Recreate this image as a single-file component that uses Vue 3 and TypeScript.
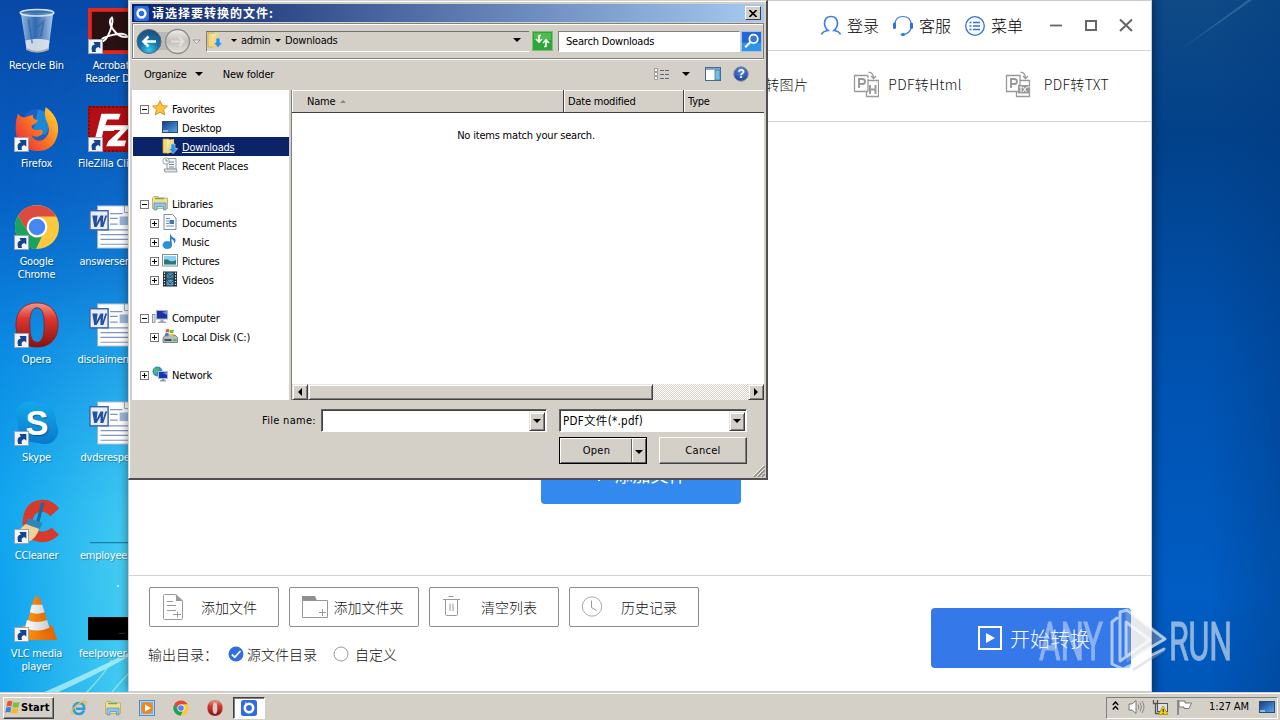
<script setup lang="ts">
interface Shortcut { id: string; icon: string; lines: string[]; link?: boolean }
interface TreeRow { id: string; icon?: string; label?: string; level: number; box?: '+' | '-'; selected?: boolean }

const columnOne: Shortcut[] = [
  { id: 'bin', icon: 'i-bin', lines: ['Recycle Bin'] },
  { id: 'firefox', icon: 'i-firefox', lines: ['Firefox'], link: true },
  { id: 'chrome', icon: 'i-chrome', lines: ['Google', 'Chrome'], link: true },
  { id: 'opera', icon: 'i-opera', lines: ['Opera'], link: true },
  { id: 'skype', icon: 'i-skype', lines: ['Skype'], link: true },
  { id: 'ccleaner', icon: 'i-ccleaner', lines: ['CCleaner'], link: true },
  { id: 'vlc', icon: 'i-vlc', lines: ['VLC media', 'player'], link: true },
]
const columnTwo: Shortcut[] = [
  { id: 'acrobat', icon: 'i-acrobat', lines: ['Acrobat', 'Reader DC'], link: true },
  { id: 'filezilla', icon: 'i-filezilla', lines: ['FileZilla Client'], link: true },
  { id: 'answers', icon: 'i-word', lines: ['answersen....'] },
  { id: 'disclaimer', icon: 'i-word', lines: ['disclaimerm...'] },
  { id: 'dvds', icon: 'i-word', lines: ['dvdsrespe....'] },
  { id: 'employee', icon: 'i-line', lines: ['employeep...'] },
  { id: 'feel', icon: 'i-black', lines: ['feelpower......'] },
]
const tree: TreeRow[] = [
  { id: 'fav', icon: 't-star', label: 'Favorites', level: 0, box: '-' },
  { id: 'desk', icon: 't-desktop', label: 'Desktop', level: 1 },
  { id: 'down', icon: 't-download', label: 'Downloads', level: 1, selected: true },
  { id: 'recent', icon: 't-recent', label: 'Recent Places', level: 1 },
  { id: 'gap1', level: 0 },
  { id: 'lib', icon: 't-library', label: 'Libraries', level: 0, box: '-' },
  { id: 'docs', icon: 't-doc', label: 'Documents', level: 1, box: '+' },
  { id: 'music', icon: 't-music', label: 'Music', level: 1, box: '+' },
  { id: 'pics', icon: 't-picture', label: 'Pictures', level: 1, box: '+' },
  { id: 'vids', icon: 't-video', label: 'Videos', level: 1, box: '+' },
  { id: 'gap2', level: 0 },
  { id: 'comp', icon: 't-computer', label: 'Computer', level: 0, box: '-' },
  { id: 'disk', icon: 't-disk', label: 'Local Disk (C:)', level: 1, box: '+' },
  { id: 'gap3', level: 0 },
  { id: 'net', icon: 't-network', label: 'Network', level: 0, box: '+' },
]
const actions = [
  { icon: 'a-file', label: '添加文件' },
  { icon: 'a-folder', label: '添加文件夹', wide: true },
  { icon: 'a-trash', label: '清空列表' },
  { icon: 'a-clock', label: '历史记录' },
]
const quickLaunch = ['q-ie', 't-library', 'q-player', 'i-chrome', 'i-opera']
</script>

<template>
  <div class="screen">
    <svg class="defs" width="0" height="0">
      <defs>
        <linearGradient id="gBin" x1="0" x2="1" y1="0" y2="0"><stop offset="0" stop-color="#b9d4ee" stop-opacity=".85" /><stop offset=".45" stop-color="#4d7fb8" stop-opacity=".6" /><stop offset="1" stop-color="#c4daee" stop-opacity=".9" /></linearGradient>
        <linearGradient id="gFox" x1="0" x2="1" y1=".8" y2="0"><stop offset="0" stop-color="#e62b3c" /><stop offset=".5" stop-color="#ff7c1f" /><stop offset="1" stop-color="#ffe335" /></linearGradient>
        <linearGradient id="gOpera" x1="0" x2="0" y1="0" y2="1"><stop offset="0" stop-color="#f5988c" /><stop offset=".35" stop-color="#dc3830" /><stop offset="1" stop-color="#8a100e" /></linearGradient>
        <linearGradient id="gSkype" x1="0" x2="0" y1="0" y2="1"><stop offset="0" stop-color="#12a9ec" /><stop offset="1" stop-color="#0a78cc" /></linearGradient>
        <linearGradient id="gCone" x1="0" x2="1" y1="0" y2="0"><stop offset="0" stop-color="#ff9a1c" /><stop offset="1" stop-color="#e06000" /></linearGradient>
        <linearGradient id="gWhite" x1="0" x2="1" y1="0" y2="0"><stop offset="0" stop-color="#fff" /><stop offset="1" stop-color="#c8ccd2" /></linearGradient>
        <linearGradient id="gScreen" x1="0" x2="1" y1="0" y2="1"><stop offset="0" stop-color="#123a86" /><stop offset="1" stop-color="#5aa6ea" /></linearGradient>
        <linearGradient id="gFolder" x1="0" x2="1" y1="0" y2="1"><stop offset="0" stop-color="#fdf3b4" /><stop offset="1" stop-color="#e2b541" /></linearGradient>
        <radialGradient id="gBack" cx=".5" cy=".85" r=".8"><stop offset="0" stop-color="#35c8ee" /><stop offset=".5" stop-color="#1470a8" /><stop offset="1" stop-color="#1d4f80" /></radialGradient>
        <linearGradient id="gFwd" x1="0" x2="0" y1="0" y2="1"><stop offset="0" stop-color="#f0eeea" /><stop offset=".5" stop-color="#c2bfba" /><stop offset="1" stop-color="#e8e6e2" /></linearGradient>
        <radialGradient id="gHelp" cx=".5" cy=".3" r=".8"><stop offset="0" stop-color="#5f8ce4" /><stop offset="1" stop-color="#12358e" /></radialGradient>
      </defs>
      <symbol id="i-bin" viewBox="0 0 48 48">
        <path d="M7 5 L41 5 L36 43 Q24 49 13 43 Z" fill="url(#gBin)" />
        <path d="M12 34 Q24 30 37 34 L36 43 Q24 48 13 43 Z" fill="#e8eaec" opacity=".85" />
        <path d="M15 12 L19 37 M24 20 L31 14 L28 30" stroke="#2a62a4" stroke-width="2" fill="none" opacity=".6" />
        <ellipse cx="24" cy="5" rx="17.5" ry="3.4" fill="#5785b6" fill-opacity=".6" stroke="#d5e2ee" stroke-width="1.6" />
        <path d="M13 43 Q24 48.500 36 43" fill="none" stroke="#aaa" stroke-width="2" />
      </symbol>
      <symbol id="i-firefox" viewBox="0 0 48 48">
        <circle cx="25" cy="21" r="18" fill="#1d5fc4" />
        <path d="M25 4 Q36 5 39 17 L33 30 L20 27 Z" fill="#17a5e6" opacity=".6" />
        <path d="M33 1 Q47 11 46 27 Q43 47 24 47 Q4 46 2 28 Q1 17 4 8 Q8 12 11 12 Q15 10 20 9 Q18 13 25 15 Q23 18 21 19 L18 21 Q20 26 26 25 Q32 24 29 30 Q23 34 18 30 Q22 39 31 35 Q40 28 34 16 Q31 9 33 1Z" fill="url(#gFox)" />
      </symbol>
      <symbol id="i-chrome" viewBox="0 0 48 48">
        <circle cx="24" cy="24" r="23" fill="#fbc93d" />
        <path d="M4.100 12.500 A23 23 0 0 1 44 13 H24 L14.500 29Z" fill="#dc4b3e" />
        <path d="M4.100 12.500 L14.500 29 A11 11 0 0 0 29 34 L23 47 A23 23 0 0 1 4.100 12.500" fill="#1aa260" />
        <circle cx="24" cy="24" r="10.800" fill="#fff" /><circle cx="24" cy="24" r="8.600" fill="#4687f4" />
      </symbol>
      <symbol id="i-opera" viewBox="0 0 48 48">
        <path fill-rule="evenodd" d="M24 1 C38 1 46 10 46 24 S38 47 24 47 S2 38 2 24 S10 1 24 1Z M24 6 C18 6 16.500 14 16.500 24 S18 42 24 42 S31.500 34 31.500 24 S30 6 24 6Z" fill="url(#gOpera)" stroke="#8d1a16" stroke-width=".8" />
      </symbol>
      <symbol id="i-skype" viewBox="0 0 48 48">
        <path d="M14 2 Q20 1 24 3 Q44 3 44 24 Q49 34 42 42 Q36 48 27 45 Q4 45 4 24 Q-1 12 5 6 Q9 2 14 2Z" fill="url(#gSkype)" />
        <text x="24" y="37" text-anchor="middle" font-family="Liberation Sans, sans-serif" font-size="36" font-weight="700" fill="#fff">S</text>
      </symbol>
      <symbol id="i-ccleaner" viewBox="0 0 48 48">
        <path d="M47 11 L38 19 Q30 11 22 17 Q16 26 22 33 Q31 38 39 31 L47 38 Q39 47 27 46 Q8 44 9 24 Q11 3 28 2 Q40 1 47 11Z" fill="#d53a2c" />
        <path d="M30 5 L24 28" stroke="#1a6b9c" stroke-width="3.400" />
        <path d="M15 21 L30 26 L26 33 L12 28Z" fill="#2c86ba" />
        <path d="M12 27 L26 32 Q24 42 14 46 L2 44 Q1 36 12 27Z" fill="#f3d196" />
      </symbol>
      <symbol id="i-vlc" viewBox="0 0 48 48">
        <path d="M9 31 H40 L45 46 H4Z" fill="url(#gCone)" />
        <path d="M21 2 Q24 -1 27 2 L38 37 Q24 44 11 37Z" fill="url(#gCone)" />
        <path d="M18.500 9 H29.500 L32 17 Q24 20 16.500 17Z M13.500 25 Q24 29 34.500 25 L37 33 Q24 39 11.500 33Z" fill="url(#gWhite)" />
      </symbol>
      <symbol id="i-acrobat" viewBox="0 0 48 48">
        <rect width="48" height="48" fill="#e3271c" /><rect x="4" y="4" width="44" height="40" fill="#281013" />
        <path d="M25 10 Q20 14 26 22 Q33 32 41 30 Q39 25 26 28 Q13 31 14 35 Q19 35 23 24 Q27 13 25 10Z" fill="none" stroke="#fff" stroke-width="2" />
      </symbol>
      <symbol id="i-filezilla" viewBox="0 0 48 48">
        <rect width="48" height="48" fill="#b10f14" /><rect x="1" y="1" width="46" height="46" fill="none" stroke="#7e0808" stroke-width="2" stroke-dasharray="2 2" />
        <path d="M14 8 H34 L32 14 H20 L18 20 H29 L27 26 H16 L13 39 H6Z M28 20 H45 L30 36 H40 L38 42 H19 L21 37 L34 25 H26Z" fill="#fff" />
      </symbol>
      <symbol id="i-word" viewBox="0 0 48 48">
        <rect x="10" y="2" width="38" height="44" fill="#fff" stroke="#9fb3cc" /><path d="M38 2 V9 H48" fill="none" stroke="#8ba2c0" />
        <path d="M23 10 H36 M23 15 H31 M23 21 H31 M13 27 H46 M13 32 H46 M13 37 H46 M13 42 H46" stroke="#7f97c0" stroke-width="1.300" /><rect x="33" y="13" width="12" height="9" fill="#9bb6da" />
        <rect x="2" y="7" width="19" height="20" fill="#e6eefb" stroke="#3b62ab" stroke-width="1.500" />
        <path d="M4.500 12 H10 L9 20 L13 12 H16 L15.500 20 L18 12 H20 L16 24 H13 L13 17 L9 24 H6.500Z" fill="#274fa0" />
      </symbol>
      <symbol id="i-line" viewBox="0 0 48 48"><path d="M2 46.500 H48" stroke="#1b7fa8" stroke-width="1.400" /></symbol>
      <symbol id="i-black" viewBox="0 0 48 48"><rect y="22" width="48" height="24" fill="#000" /><path d="M32 39 h7" stroke="#333" /></symbol>
      <symbol id="i-arrow" viewBox="0 0 15 15">
        <rect x=".5" y=".5" width="14" height="14" fill="#f1f4f8" stroke="#9aa4b0" />
        <path d="M4.200 13 Q2 6.500 6.800 5.600 L5.500 3 H12.300 V9.500 L10.200 8 Q6.500 9 8 13Z" fill="#14458c" />
      </symbol>

      <symbol id="t-star" viewBox="0 0 16 16"><path d="M8 .7 L10.200 5.600 L15.500 6.100 L11.500 9.700 L12.800 15 L8 12.200 L3.200 15 L4.500 9.700 L.5 6.100 L5.800 5.600Z" fill="#fcc53c" stroke="#d98a1a" stroke-width=".9" /></symbol>
      <symbol id="t-desktop" viewBox="0 0 16 16"><rect x=".5" y="2.500" width="15" height="11" fill="url(#gScreen)" stroke="#274b7c" /><path d="M1 12 h5" stroke="#b8d4ee" stroke-width="1.400" /></symbol>
      <symbol id="t-download" viewBox="0 0 16 16"><path d="M1 1 H7 V15 H1Z" fill="#f3d878" stroke="#c9a13a" stroke-width=".7" /><path d="M5 2 L12 1 V14 L5 15.500Z" fill="url(#gFolder)" /><path d="M9 6 H13 V10.500 H15.800 L11 15.700 L6.500 10.500 H9Z" fill="#2f8fdc" stroke="#d0eafc" stroke-width=".6" /></symbol>
      <symbol id="t-recent" viewBox="0 0 16 16"><path d="M5 1.500 H14 V12 H5Z" fill="#f4f5f6" stroke="#8b939c" stroke-width=".9" /><path d="M7 5 h5 M7 7.500 h5 M7 10 h5" stroke="#7b8794" /><path d="M2 12 H14.500 L15 15 H3Z" fill="#dfe2e6" stroke="#858d96" stroke-width=".8" /><circle cx="4" cy="4" r="3.200" fill="#fff" stroke="#7f8d9c" stroke-width=".8" /><path d="M4 2 V4 H5.800" fill="none" stroke="#44566a" stroke-width=".8" /></symbol>
      <symbol id="t-library" viewBox="0 0 16 16"><path d="M.5 3 L2 1.500 H6 L7 3 H15.500 V13.500 H.5Z" fill="#f3df92" stroke="#c5a448" stroke-width=".8" /><path d="M3 3.500 h9" stroke="#65b05c" stroke-width="1.500" /><path d="M2 8 H14 V15 H11.500 V11.500 H5 V15 H2Z" fill="#8cc6ea" stroke="#4f93c2" stroke-width=".7" /></symbol>
      <symbol id="t-doc" viewBox="0 0 16 16"><path d="M2 .5 H10.500 L14 4 V15.500 H2Z" fill="#fafcfe" stroke="#7c8ea4" /><path d="M4 4.500 h4 M4 7 h3 M4 9.500 h3 M4 12 h8" stroke="#6f94c4" /><rect x="7.500" y="6" width="4.500" height="4" fill="#3978b4" /></symbol>
      <symbol id="t-music" viewBox="0 0 16 16"><ellipse cx="5.300" cy="12" rx="4.300" ry="3.500" fill="#2794e0" stroke="#1768b4" stroke-width=".6" /><path d="M8 12 V.7 Q9.500 4 13 5.500 Q14.500 8 12 10.500 Q12.500 7 9.600 6 V12Z" fill="#2a7fce" /></symbol>
      <symbol id="t-picture" viewBox="0 0 16 16"><rect x=".5" y="2.500" width="15" height="11.500" fill="#fff" stroke="#7f8c98" /><rect x="2" y="4" width="12" height="8.500" fill="#8fd0f0" /><path d="M2 8 Q5 6 8 9 Q11 10 14 8 V12.500 H2Z" fill="#287a78" /></symbol>
      <symbol id="t-video" viewBox="0 0 16 16"><rect x="1" y=".5" width="14" height="15" fill="#1d2530" /><path d="M2.500 1.500 V15 M13.500 1.500 V15" stroke="#dfe8f0" stroke-width="1.300" stroke-dasharray="1.400 1.400" /><rect x="4.500" y="1.500" width="7" height="6" fill="#2f8fb4" /><rect x="4.500" y="8.500" width="7" height="6" fill="#3ea4cc" /><path d="M5 2 l3 4 l3 -3 M5 9 l3 4 l3-3" stroke="#8e2830" fill="none" /></symbol>
      <symbol id="t-computer" viewBox="0 0 16 16"><rect x="4.500" y="1.500" width="11" height="8.500" fill="#1b32a8" stroke="#a9b4c6" /><path d="M10 3 L15 2 V6Z" fill="#6c8ae8" /><path d="M8.500 10.500 h3 v2 h2.500 v1.500 h-8 v-1.500 h2.500Z" fill="#9ba5b6" /><rect x=".5" y="5.500" width="2.500" height="8" fill="#dfe4ea" stroke="#7d8896" stroke-width=".8" /></symbol>
      <symbol id="t-disk" viewBox="0 0 16 16"><path d="M1 9.500 L4 7 H13 L15.500 9.500 V14.500 H1Z" fill="#b5bac2" stroke="#687078" stroke-width=".8" /><path d="M2.500 11 h7 v2 h-7Z" fill="#45505c" /><path d="M11 11 h3.500 v2 h-3.500Z" fill="#58c248" /><path d="M4 1.500 Q6 .5 7.500 1.500 L7 4.500 Q5.500 3.700 3.500 4.500Z" fill="#e4572e" /><path d="M8.200 1.800 Q10 2.700 12 1.800 L11.300 4.800 Q9.500 5.500 7.700 4.700Z" fill="#67b83c" /><path d="M3.300 5.200 Q5 4.500 6.800 5.300 L6.200 8.300 H2.500Z" fill="#3a86d4" /><path d="M7.500 5.500 Q9.300 6.300 11.200 5.500 L10.500 8.600 H6.800Z" fill="#f4c22f" /></symbol>
      <symbol id="t-network" viewBox="0 0 16 16"><circle cx="5.500" cy="5.500" r="5" fill="#2f93cf" /><path d="M2 3 Q5 1 7 3 L5 7 L2 8Z" fill="#56b868" /><rect x="6.500" y="5.500" width="9" height="7" fill="#1834b0" stroke="#b1bccb" /><path d="M11 7 L15 6 V9Z" fill="#6c8ae8" /><path d="M9.500 13 h3 v1.200 h1.500 v1.300 h-6 v-1.300 h1.500Z" fill="#8b97aa" /></symbol>

      <symbol id="a-file" viewBox="0 0 28 28"><path d="M16 1.500 H5.500 Q4.500 1.500 4.500 2.500 V25.500 Q4.500 26.500 5.500 26.500 H22.500 Q23.500 26.500 23.500 25.500 V8Z" fill="none" stroke="#999" /><path d="M17 1 L24 8 H17Z" fill="#999" /><path d="M8 8.500 h6 M8 12.500 h9 M8 17.500 h9 M14 21.500 h8 M18.500 18.500 v6" stroke="#999" /></symbol>
      <symbol id="a-folder" viewBox="0 0 28 28"><path d="M1.500 7.500 H26.500 V24.500 H1.500Z" fill="none" stroke="#999" /><path d="M1 3 H14 L16 7.500 H1Z" fill="#8f8f8f" /><path d="M18 19.500 h7 M21.500 16 v7" stroke="#999" /></symbol>
      <symbol id="a-trash" viewBox="0 0 28 28"><path d="M4 6.500 H21 M9.500 3.500 H14.500 M6.500 7 V21.500 Q6.500 22.500 7.500 22.500 H17.500 Q18.500 22.500 18.500 21.500 V7 M11 10.500 V18 M14 10.500 V18" fill="none" stroke="#999" /></symbol>
      <symbol id="a-clock" viewBox="0 0 28 28"><circle cx="13" cy="13.500" r="9.700" fill="none" stroke="#aaa" /><path d="M12.500 7.500 V14.500 L17.500 17.500" fill="none" stroke="#999" /></symbol>
      <symbol id="a-logo" viewBox="0 0 16 16"><rect width="16" height="16" rx="2.500" fill="#2c6be4" /><circle cx="8" cy="8" r="4.200" fill="none" stroke="#fff" stroke-width="2.600" /><path d="M4 1.500 L8 4.500 L4 7Z" fill="#fff" opacity=".5" /></symbol>
      <symbol id="q-ie" viewBox="0 0 16 16"><path d="M13 10.500 Q11.500 14 8 14 Q3 14 2.700 8.500 Q3 3 8 3 Q13.500 3.200 13.200 8.800 H5" fill="none" stroke="#2d9bdc" stroke-width="2.600" /><path d="M1.500 14.500 Q-1 11 6 5 Q12 .5 15 1.800 Q16 3 14 6" fill="none" stroke="#e9bc3c" stroke-width="1.300" /></symbol>
      <symbol id="q-player" viewBox="0 0 16 16"><rect x=".5" y=".5" width="15" height="15" fill="#b7d5ef" stroke="#4f8fc4" /><rect x="2" y="2" width="12" height="12" fill="#7fb2de" /><circle cx="8" cy="8" r="6" fill="#f0871c" /><path d="M6 4.500 L12 8 L6 11.500Z" fill="#fff" /></symbol>
    </svg>

    <svg class="wallpaper" width="1280" height="720" viewBox="0 0 1280 720">
      <defs>
        <linearGradient id="wl" x1="0" x2="0" y1="0" y2="1"><stop offset="0" stop-color="#0848a6" /><stop offset=".28" stop-color="#0761c6" /><stop offset=".5" stop-color="#0b8be4" /><stop offset=".72" stop-color="#12a6f0" /><stop offset="1" stop-color="#0ca0ec" /></linearGradient>
        <linearGradient id="wlx" x1="0" x2="1" y1="0" y2="0"><stop offset="0" stop-color="#5fe0f4" stop-opacity="0" /><stop offset="1" stop-color="#5fe0f4" stop-opacity=".75" /></linearGradient>
        <linearGradient id="wm" x1="0" x2="0" y1="0" y2="1"><stop offset="0" stop-color="#000" /><stop offset=".4" stop-color="#222" /><stop offset=".8" stop-color="#fff" /></linearGradient>
        <mask id="mk"><rect width="140" height="700" fill="url(#wm)" /></mask>
        <linearGradient id="wr" x1="0" x2="0" y1="0" y2="1"><stop offset="0" stop-color="#0f4a86" /><stop offset=".19" stop-color="#02418a" /><stop offset=".5" stop-color="#0051ae" /><stop offset=".85" stop-color="#005dc3" /><stop offset="1" stop-color="#0056b8" /></linearGradient>
        <linearGradient id="wrx" x1="0" x2="1" y1="0" y2="0"><stop offset="0" stop-color="#003070" stop-opacity=".3" /><stop offset=".12" stop-color="#003a80" stop-opacity="0" /><stop offset=".45" stop-color="#003a80" stop-opacity="0" /><stop offset="1" stop-color="#003a80" stop-opacity=".4" /></linearGradient>
      </defs>
      <rect width="140" height="700" fill="url(#wl)" />
      <rect width="140" height="700" fill="url(#wlx)" mask="url(#mk)" />
      <path d="M40 694 Q90 672 130 652 L130 656 Q90 678 54 694Z" fill="#b9f3f8" opacity=".75" />
      <path d="M86 693 Q104 675 112 660 M112 692 Q122 680 130 672" stroke="#a7f0d8" stroke-width="1.500" fill="none" opacity=".7" />
      <circle cx="118" cy="586" r="1" fill="#d8fbff" />
      <rect x="1150" width="130" height="700" fill="url(#wr)" />
      <rect x="1150" width="130" height="700" fill="url(#wrx)" />
      <path d="M1180 50 L1248 0 H1252Z" fill="#5e93bd" opacity=".4" />
    </svg>

    <div class="desk col1">
      <div v-for="s in columnOne" :key="s.id" class="shortcut">
        <div class="pic"><svg width="46" height="46"><use :href="'#' + s.icon" /></svg><svg v-if="s.link" class="lnk" width="15" height="15"><use href="#i-arrow" /></svg></div>
        <span v-for="l in s.lines" :key="l">{{ l }}</span>
      </div>
    </div>
    <div class="desk col2">
      <div v-for="s in columnTwo" :key="s.id" class="shortcut">
        <div class="pic"><svg width="46" height="46"><use :href="'#' + s.icon" /></svg><svg v-if="s.link" class="lnk" width="15" height="15"><use href="#i-arrow" /></svg></div>
        <span v-for="l in s.lines" :key="l">{{ l }}</span>
      </div>
    </div>

    <main class="app">
      <header class="app-top">
        <span class="tool"><svg width="22" height="22" viewBox="0 0 22 22"><path d="M1.500 19.500 Q3 16 8 15.500 Q4.500 12.500 4.500 8 Q5 1.500 11 1.500 Q17 1.500 17.500 8 Q17.500 12.500 14 15.500 Q19 16 20.500 19.500" fill="none" stroke="#3f7de6" stroke-width="1.700" /></svg>登录</span>
        <span class="tool"><svg width="22" height="22" viewBox="0 0 22 22"><path d="M3 9 Q3.500 1.500 11 1.500 Q18.500 1.500 19 9 M19 13 Q17.500 18.500 12 19.500" fill="none" stroke="#3f7de6" stroke-width="1.200" /><rect x="1" y="7.500" width="3" height="6.500" rx="1.500" fill="#2f6fe0" /><rect x="18" y="7.500" width="3" height="6.500" rx="1.500" fill="#2f6fe0" /><ellipse cx="11" cy="19.500" rx="2.200" ry="1.500" fill="#2f6fe0" /></svg>客服</span>
        <span class="tool"><svg width="22" height="22" viewBox="0 0 22 22"><circle cx="11" cy="11" r="9.300" fill="none" stroke="#2f6fe0" stroke-width="1.300" /><path d="M5.500 7.500 h2 M9 7.500 h7 M5.500 11 h2 M9 11 h7 M5.500 14.500 h2 M9 14.500 h7" stroke="#2f6fe0" stroke-width="1.500" /></svg>菜单</span>
        <svg class="winctl" width="90" height="16" viewBox="0 0 90 16"><path d="M1 7.500 H13" stroke="#666" stroke-width="1.800" /><rect x="37" y="3" width="10" height="9" fill="none" stroke="#666" stroke-width="2" /><path d="M71 1.500 L83 13 M83 1.500 L71 13" stroke="#666" stroke-width="2" /></svg>
      </header>
      <nav class="tabs">
        <span class="tab t1">PDF转图片</span>
        <span class="tab t2"><svg width="26" height="28" viewBox="0 0 26 28"><path d="M15 7 V5 Q15 4.500 14.500 4.500 H2 Q1.500 4.500 1.500 5 V20 Q1.500 20.500 2 20.500 H14.500 Q15 20.500 15 20 V8 M15.500 9.500 H25.500 V25.500 H13.500 V21 M15.500 1.500 Q20 1 20.500 7 M18 5 L20.500 7.500 L23 5" fill="none" stroke="#999" stroke-width="1.300" /><path d="M6 17 V8 H9.500 Q12 8.200 12 10.500 T9.500 13 H6 M17 14 V23 M22.500 14 V23 M17 18.500 H22.500" fill="none" stroke="#999" stroke-width="1.900" /></svg>PDF转Html</span>
        <span class="tab t3"><svg width="26" height="28" viewBox="0 0 26 28"><path d="M1.500 4.500 H15 V20.500 H1.500Z M15.500 9.500 H24.500 V25.500 H11.500 V21 M15.500 1.500 Q20 1 20.500 7 M18 5 L20.500 7.500 L23 5" fill="none" stroke="#999" stroke-width="1.300" /><path d="M6 17 V8 H9.500 Q12 8.200 12 10.500 T9.500 13 H6" fill="none" stroke="#999" stroke-width="1.900" /><rect x="13" y="14" width="12" height="8.500" fill="#999" /><path d="M14.500 16 h3 M16 16 v5 M18 16 l3.500 5 M21.500 16 l-3.500 5 M22 16 h2.500" stroke="#fff" /></svg>PDF转TXT</span>
      </nav>
      <section class="canvas"><button class="add"><svg width="14" height="18" viewBox="0 0 14 18"><path d="M7 2 V16 M0 9 H14" stroke="#fff" stroke-width="2" /></svg>添加文件</button></section>
      <footer class="app-bottom">
        <div class="left">
          <div class="actions">
            <button v-for="a in actions" :key="a.icon" class="act" :class="{ wide: a.wide }"><svg width="28" height="28"><use :href="'#' + a.icon" /></svg><span>{{ a.label }}</span></button>
          </div>
          <div class="output"><span>输出目录：</span><svg width="16" height="16" viewBox="0 0 16 16"><circle cx="8" cy="8" r="7.500" fill="#2f6fdf" /><path d="M3.800 8.500 L6.800 11.200 L12.500 5" fill="none" stroke="#fff" stroke-width="1.700" /></svg><span class="first">源文件目录</span><svg width="16" height="16" viewBox="0 0 16 16"><circle cx="8" cy="8" r="7" fill="#fff" stroke="#999" /></svg><span class="second">自定义</span></div>
        </div>
        <button class="start-convert"><svg width="24" height="24" viewBox="0 0 24 24"><rect x="1" y="1" width="22" height="22" fill="none" stroke="#fff" stroke-width="2" /><path d="M8 7 L17 12 L8 17Z" fill="#fff" /></svg>开始转换</button>
      </footer>
    </main>

    <div class="dialog">
      <div class="title"><svg width="15" height="15"><use href="#a-logo" /></svg><b>请选择要转换的文件:</b><span class="close"><svg width="8" height="7" viewBox="0 0 8 7"><path d="M.5 0 L7.500 7 M7.500 0 L.5 7" stroke="#000" stroke-width="1.600" /></svg></span></div>
      <div class="address">
        <svg class="nav" width="70" height="30" viewBox="0 0 70 30"><rect x="14" y="5" width="28" height="18" fill="#bcb9b4" /><circle cx="14" cy="14.500" r="12" fill="url(#gBack)" stroke="#5a6670" /><path d="M21 14.500 H9 M13.500 9.500 L8.500 14.500 L13.500 19.500" fill="none" stroke="#fff" stroke-width="2.600" /><circle cx="42.500" cy="14.500" r="12" fill="url(#gFwd)" stroke="#8f8d89" stroke-width="1.300" /><path d="M36 14.500 H48 M44 10 L48.500 14.500 L44 19" fill="none" stroke="#e2e0dc" stroke-width="2.200" /><path d="M58 13 H65 L61.500 16.500Z" fill="#eee" stroke="#8e8b86" stroke-width=".8" /></svg>
        <div class="crumbs"><svg width="16" height="16"><use href="#t-download" /></svg><i class="tri c1"></i><span class="adm">admin</span><i class="tri c2"></i><span>Downloads</span><i class="tri big c3"></i></div>
        <svg class="refresh" width="21" height="20" viewBox="0 0 21 20"><rect x=".5" y=".5" width="20" height="19" fill="#2fa63a" stroke="#7dbb7f" /><rect x="2" y="2" width="17" height="7" fill="#64c95f" opacity=".6" /><path d="M7 4 V10 M4 8 L7 11 L10 8 M14 16 V10 M11 12 L14 9 L17 12 M7 4.500 H9 M12 15.500 H14" fill="none" stroke="#fff" stroke-width="1.600" /></svg>
        <div class="search">Search Downloads</div>
        <svg class="go" width="21" height="21" viewBox="0 0 20 20"><rect x=".5" y=".5" width="19" height="19" fill="#2166d6" stroke="#9bc4ee" /><rect x="1" y="11" width="18" height="8" fill="#38a6ee" opacity=".7" /><circle cx="12" cy="7.500" r="4" fill="#3c76d8" stroke="#fff" stroke-width="1.700" /><path d="M9 10.500 L4 15.500" stroke="#fff" stroke-width="2.200" /></svg>
      </div>
      <div class="commands"><span>Organize</span><i class="tri big"></i><span class="newf">New folder</span>
        <svg class="view" width="16" height="13" viewBox="0 0 16 13"><path d="M.5 .5 h3 v3 h-3Z M.5 4.500 h3 v3 h-3Z M.5 8.500 h3 v3 h-3Z" fill="#fff" stroke="#8a8a8a" stroke-width=".8" /><path d="M6 2.500 h4 M11 2.500 h4 M6 6.500 h4 M11 6.500 h4 M6 10.500 h4 M11 10.500 h4" stroke="#5c6878" /></svg>
        <i class="tri big v"></i>
        <svg class="pane" width="16" height="14" viewBox="0 0 16 14"><rect x=".5" y=".5" width="15" height="13" fill="#fff" stroke="#46688f" /><path d="M1 2 H15" stroke="#86a7cc" stroke-width="2" /><rect x="10" y="3" width="5" height="10" fill="#72bfe8" stroke="#46789f" stroke-width=".8" /></svg>
        <svg class="help" width="16" height="16" viewBox="0 0 16 16"><circle cx="8" cy="8" r="7.200" fill="url(#gHelp)" stroke="#7f8a9c" /><text x="8" y="12.200" text-anchor="middle" font-family="Liberation Sans, sans-serif" font-weight="700" font-size="12" fill="#fff">?</text></svg>
      </div>
      <div class="body">
        <div class="tree">
          <div v-for="r in tree" :key="r.id" class="row" :class="['l' + r.level, { selected: r.selected }]">
            <svg v-if="r.label" class="box" width="9" height="9" viewBox="0 0 9 9"><g v-if="r.box"><rect x=".5" y=".5" width="8" height="8" fill="#fff" stroke="#777" /><path d="M2 4.500 H7" stroke="#000" /><path v-if="r.box === '+'" d="M4.500 2 V7" stroke="#000" /></g></svg>
            <svg v-if="r.icon" class="ti" width="16" height="16"><use :href="'#' + r.icon" /></svg><span v-if="r.label">{{ r.label }}</span>
          </div>
        </div>
        <div class="files">
          <div class="heads"><span class="h n">Name<i class="up"></i></span><span class="h d">Date modified</span><span class="h t">Type</span></div>
          <div class="empty">No items match your search.</div>
          <div class="hscroll"><span class="sb"><i class="lt"></i></span><span class="thumb"></span><span class="track"></span><span class="sb"><i class="rt"></i></span></div>
        </div>
      </div>
      <div class="bottom">
        <div class="line"><span class="fn">File name:</span><div class="combo name"><span class="dd"><i class="tri big"></i></span></div><div class="combo filter"><span class="val">PDF文件(*.pdf)</span><span class="dd"><i class="tri big"></i></span></div></div>
        <div class="line two"><div class="btn open"><span>Open</span><em><i class="tri big"></i></em></div><div class="btn cancel">Cancel</div></div>
      </div>
      <svg class="grip" width="12" height="12" viewBox="0 0 12 12"><path d="M1 12 L12 1 M5 12 L12 5 M9 12 L12 9" stroke="#8a867e" stroke-width="1.500" /><path d="M0 11 L11 0 M4 11 L11 4" stroke="#fff" stroke-width=".8" /></svg>
    </div>

    <div class="taskbar">
      <div class="start"><svg width="17" height="17" viewBox="0 0 17 17"><path d="M3.500 2.500 Q6 1 8.300 2.500 L7.400 7.500 Q5 6.300 2.500 7.500Z" fill="#e9542c" /><path d="M9.300 3 Q12 4.500 15.500 3 L14.500 8 Q11.500 9.300 8.400 8Z" fill="#7bbf3f" /><path d="M2.300 8.600 Q4.800 7.300 7.200 8.600 L6.300 13.600 Q3.800 12.300 1.300 13.600Z" fill="#3b80d6" /><path d="M8.200 9 Q11.200 10.400 14.300 9.100 L13.300 14.100 Q10.200 15.500 7.300 14Z" fill="#f5b926" /></svg><span>Start</span></div>
      <div class="quick"><svg v-for="q in quickLaunch" :key="q" width="16" height="16"><use :href="'#' + q" /></svg></div>
      <div class="active"><svg width="16" height="16"><use href="#a-logo" /></svg></div>
      <div class="tray">
        <svg class="chev" width="7" height="11" viewBox="0 0 7 11"><path d="M.8 4 L3.500 1 L6.200 4 M.8 8.500 L3.500 5.500 L6.200 8.500" fill="none" stroke="#000" stroke-width="1.400" /></svg>
        <svg width="17" height="16" viewBox="0 0 17 16"><path d="M1 5 H4 L8 1.500 V14.500 L4 11 H1Z" fill="#fff" stroke="#777" /><path d="M10 5.500 Q12 8 10 10.500 M12 3.500 Q15 8 12 12.500 M14 2 Q18 8 14 14" fill="none" stroke="#888" /></svg>
        <svg width="17" height="16" viewBox="0 0 17 16"><rect x="5.500" y="4.500" width="10" height="8" fill="#dde0e4" stroke="#555" /><path d="M1.500 1 V4.500 H5.500 V1 M3.500 5 V14.500 H8" fill="none" stroke="#555" stroke-width="1.300" /><path d="M11 7 L16 15.500 H6.500Z" fill="#f8d414" stroke="#a08000" stroke-width=".7" /><path d="M11.200 10 V13 M11.200 13.800 V14.800" stroke="#000" /></svg>
        <svg width="17" height="16" viewBox="0 0 17 16"><path d="M2 1 V16" stroke="#777" stroke-width="1.500" /><path d="M3 2 H9 V4 H15.500 L13 9.500 H8 V8 H3Z" fill="#fff" stroke="#777" /></svg>
        <span class="clock">1:27 AM</span>
        <svg class="sd" width="16" height="16"><use href="#t-desktop" /></svg>
      </div>
    </div>

    <svg class="mark" width="200" height="74" viewBox="0 0 200 74">
      <g fill="#e4eaf2" stroke="#e4eaf2" stroke-width=".9" font-family="Roboto, sans-serif" font-size="53"><text x="3" y="56" textLength="64" lengthAdjust="spacingAndGlyphs" opacity=".5">ANY</text><text x="133" y="56" textLength="63" lengthAdjust="spacingAndGlyphs" opacity=".62">RUN</text></g>
      <path d="M91 8 L128 35 L92 56 L91 8Z M97 66 L128 46" fill="#b9c0c8" stroke="#b9c0c8" stroke-width="3" opacity=".35" />
      <path d="M81 14 L76 18 V60 L87 65 L128 45 M84 56 V8 L91 6 L129 35 L100 52 M90 52 V18 L114 36 L84 57" fill="none" stroke="#fff" stroke-width="3" stroke-linejoin="round" stroke-linecap="round" opacity=".6" />
    </svg>
  </div>
</template>

<style>
body { margin: 0; overflow: hidden; }
</style>
<style scoped>
* { box-sizing: border-box; }
.screen { position: relative; width: 1280px; height: 720px; overflow: hidden; background: #0b62c4; font: 11px/13px "DejaVu Sans Condensed", "Noto Sans CJK SC", sans-serif; color: #000; white-space: nowrap; letter-spacing: -.2px; }
svg { display: block; flex: none; }
button { font: inherit; border: 0; padding: 0; letter-spacing: inherit; }
.defs, .wallpaper { position: absolute; left: 0; top: 0; }
.desk { position: absolute; top: 8px; width: 76px; }
.col1 { left: -1px; }
.col2 { left: 66px; width: 90px; }
.shortcut { height: 98px; display: flex; flex-direction: column; align-items: center; color: #fff; text-shadow: 1px 1px 1px #0005; }
.col1 .shortcut { padding-right: 1px; }
.pic { position: relative; width: 46px; height: 46px; margin-bottom: 5px; }
.lnk { position: absolute; left: 0; bottom: 0; }

.app { position: absolute; left: 128px; top: 0; width: 1024px; height: 692px; background: #fff; border: 1px solid #c9ccd0; display: flex; flex-direction: column; box-shadow: 0 0 9px #0007; font-family: "Noto Sans CJK SC", sans-serif; font-weight: 300; color: #111; letter-spacing: 0; }
.app-top { height: 50px; border-bottom: 1px solid #d2d2d2; display: flex; align-items: center; justify-content: flex-end; font-size: 16px; color: #000; padding-right: 12px; }
.tool { display: flex; align-items: center; gap: 5px; margin-right: 13px; }
.tool:nth-child(3) { margin-right: 26px; }
.tabs { height: 71px; border-bottom: 1px solid #d2d2d2; display: flex; align-items: center; justify-content: flex-end; font-size: 14px; letter-spacing: .35px; padding: 0 42px 3px 0; }
.tab { display: flex; align-items: center; gap: 9px; }
.t1 { margin-right: 45px; }
.t2 { margin-right: 43px; }
.t3 { gap: 13px; }
.canvas { height: 454px; border-bottom: 1px solid #d2d2d2; display: flex; justify-content: center; align-items: flex-end; padding: 0 0 71px 2px; }
.add { width: 200px; height: 60px; border-radius: 4px; background: #3389ee; color: #fff; font-size: 18px; font-weight: 400; display: flex; align-items: center; justify-content: center; gap: 9px; padding-right: 4px; }
.app-bottom { flex: 1; display: flex; justify-content: space-between; padding: 11px 20px 0; }
.actions { display: flex; gap: 10px; }
.act { width: 130px; height: 40px; border: 1px solid #8c8c8c; border-radius: 2px; background: #fff; display: flex; align-items: center; font-size: 14px; color: #111; padding-left: 9px; font-weight: 300; }
.act span { flex: 1; text-align: center; padding-right: 7px; }
.act.wide span { padding-right: 10px; }
.act.wide { padding-left: 11px; }
.output { display: flex; align-items: center; height: 20px; margin-top: 17px; font-size: 14px; }
.output > span:first-child { width: 79px; margin-left: -1px; margin-right: 1px; }
.output .first { margin: 0 16px 0 3px; }
.second { margin-left: 6px; }
.start-convert { width: 200px; height: 60px; margin-top: 21px; border-radius: 4px; background: #3478ea; color: #fff; font-size: 20px; font-weight: 300; display: flex; align-items: center; gap: 8px; padding-left: 47px; }

.dialog { position: absolute; left: 128px; top: 0; width: 640px; height: 480px; background: #d4d0c8; border: 1px solid #d4d0c8; border-right: 2px solid #505050; border-bottom: 2px solid #505050; box-shadow: inset 1px 1px #fff; padding: 3px 2px 0 3px; }
.title { height: 18px; display: flex; align-items: center; background: linear-gradient(90deg, #0a246a, #a6caf0); color: #fff; padding: 0 3px 0 2px; }
.title b { font: 700 12px/16px "Noto Sans CJK SC", sans-serif; margin: -1px 0 0 3px; letter-spacing: 1px; }
.close { margin-left: auto; width: 16px; height: 14px; background: #d4d0c8; border: 1px solid; border-color: #fff #404040 #404040 #fff; display: flex; align-items: center; justify-content: center; }
.address { height: 36px; margin-top: 1px; border: 1px solid #808080; box-shadow: inset 1px 1px #fff, 0 1px #fff; display: flex; align-items: center; padding-left: 2px; }
.nav { margin-top: 1px; }
.crumbs { width: 323px; height: 21px; border-top: 1px solid #707070; border-left: 1px solid #808080; border-bottom: 1px solid #fff; display: flex; align-items: center; margin-left: 1px; padding-bottom: 2px; }
.tri { border: 3px solid transparent; border-top-color: #000; border-bottom: 0; width: 0; height: 0; }
.big { border-width: 4px 4px 0; }
.adm { letter-spacing: -.4px; }
.c1 { margin: 0 4px 0 8px; } .c2 { margin: 0 4px 0 5px; } .c3 { margin: 0 8px 0 auto; }
.refresh { margin-left: 3px; }
.search { width: 182px; height: 21px; margin: 0 1px 0 5px; background: #fff; border: 1px solid #808080; border-right-color: #fff; border-bottom-color: #fff; padding: 3px 0 0 7px; }
.commands { height: 31px; display: flex; align-items: center; padding: 0 15px 1px 12px; }
.commands > .tri { margin-left: 8px; }
.newf { margin-left: 20px; }
.view { margin-left: auto; } .commands > .v { margin: 0 15px 0 12px; } .pane { margin-right: 12px; }
.body { height: 310px; display: flex; }
.tree { width: 157px; background: #fff; padding: 9px 0 0 1px; }
.row { height: 19px; display: flex; align-items: center; padding-left: 7px; }
.row.l1 { padding-left: 17px; }
.box { margin-right: 3px; position: relative; top: 1px; }
.ti { margin-bottom: 1px; }
.row span { margin-left: 4px; padding-top: 2px; }
.selected { background: #0a246a; color: #fff; }
.selected span { text-decoration: underline; }
.files { flex: 1; margin-left: 2px; border-left: 1px solid #808080; background: #fff; display: flex; flex-direction: column; }
.heads { height: 23px; display: flex; background: #d4d0c8; border-bottom: 1px solid #404040; }
.h { display: flex; align-items: center; box-shadow: inset 1px 1px #fff; border-right: 1px solid #404040; padding: 1px 0 0 4px; }
.h.n { width: 272px; padding-left: 15px; } .h.d { width: 120px; } .h.t { flex: 1; border-right: 0; }
.up { border: 3px solid transparent; border-bottom-color: #888; border-top: 0; margin-left: 5px; }
.empty { flex: 1; text-align: center; padding: 16px 4px 0 0; }
.hscroll { height: 16px; display: flex; }
.sb, .thumb, .dd { background: #d4d0c8; border: 1px solid; border-color: #e8e5df #404040 #404040 #e8e5df; box-shadow: inset 1px 1px #fff, inset -1px -1px #808080; display: flex; align-items: center; justify-content: center; }
.sb { width: 16px; }
.thumb { width: 345px; }
.track { flex: 1; background: repeating-conic-gradient(#fff 0 25%, #d4d0c8 0 50%) 0 0 / 2px 2px; }
.lt, .rt { border: 4px solid transparent; border-left: 0; border-right-color: #000; }
.rt { border-left: 4px solid #000; border-right: 0; }
.bottom { padding: 9px 17px 0 0; letter-spacing: .3px; }
.line { display: flex; justify-content: flex-end; align-items: center; }
.two { margin-top: 5px; }
.fn { margin-right: 5px; }
.combo { height: 23px; background: #fff; border: 1px solid; border-color: #606060 #fff #fff #606060; box-shadow: inset 1px 1px #404040; display: flex; align-items: center; justify-content: flex-end; padding: 2px 1px 1px; }
.combo .dd { width: 16px; height: 19px; }
.name { width: 226px; }
.filter { width: 188px; margin-left: 12px; }
.val { margin-right: auto; padding-left: 2px; font-size: 11.5px; }
.btn { height: 27px; width: 88px; display: flex; align-items: center; justify-content: center; border: 1px solid; border-color: #fff #404040 #404040 #fff; box-shadow: inset -1px -1px #808080; }
.open { border-color: #000; box-shadow: inset 1px 1px #fff, inset -1px -1px #606060; }
.open span { flex: 1; text-align: center; padding-left: 2px; }
.open em { width: 15px; height: 23px; border-left: 1px solid #606060; box-shadow: inset 1px 0 #fff; display: flex; align-items: center; justify-content: center; padding-top: 3px; }
.cancel { margin-left: 12px; }
.grip { position: absolute; right: 1px; bottom: 1px; }

.taskbar { position: absolute; left: 0; top: 692px; width: 1280px; height: 28px; background: #d4d0c8; border-top: 1px solid #d4d0c8; box-shadow: inset 0 1px #fff; display: flex; align-items: center; padding: 2px 2px 0 3px; }
.start { width: 51px; height: 22px; border: 1px solid; border-color: #fff #404040 #404040 #fff; box-shadow: inset -1px -1px #808080; display: flex; align-items: center; font-weight: 700; letter-spacing: .1px; padding-bottom: 1px; }
.quick { display: flex; gap: 18px; margin-left: 17px; }
.active { width: 32px; height: 22px; margin-left: 10px; background: #fff; border: 1px solid; border-color: #404040 #fff #fff #404040; box-shadow: inset 1px 1px #808080; display: flex; align-items: center; justify-content: center; }
.tray { margin-left: auto; width: 172px; height: 22px; border: 1px solid; border-color: #808080 #fff #fff #808080; display: flex; align-items: center; gap: 7px; padding: 0 0 2px 5px; }
.chev { margin-right: 2px; }
.clock { margin-left: 9px; letter-spacing: -.1px; }
.sd { margin-left: 3px; }
.mark { position: absolute; left: 1036px; top: 604px; }
</style>
